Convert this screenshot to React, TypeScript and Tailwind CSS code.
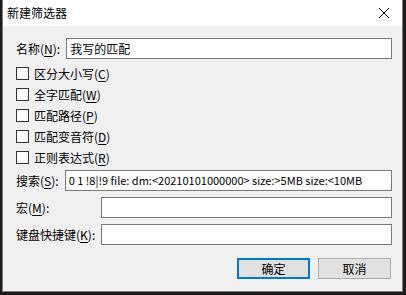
import React from "react";

const font = { fontFamily: '"Noto Sans CJK SC", "Noto Sans", sans-serif' };

const Key = ({ k }: { k: string }) => (
  <span>
    (<span className="underline underline-offset-2">{k}</span>)
  </span>
);

const Check = ({ label, k }: { label: string; k: string }) => (
  <div className="flex items-center h-[21px] gap-[5px]">
    <div className="w-[13px] h-[13px] bg-white border border-[#333333]" />
    <span>
      {label}
      <Key k={k} />
    </span>
  </div>
);

const Field = ({ value = "", small }: { value?: string; small?: boolean }) => (
  <div
    className={
      small
        ? "flex-1 h-[21px] bg-white border border-[#7a7a7a] flex items-center px-[3px] overflow-hidden whitespace-nowrap text-[11px]"
        : "flex-1 h-[21px] bg-white border border-[#7a7a7a] flex items-center px-[3px] overflow-hidden whitespace-nowrap"
    }
  >
    {value}
  </div>
);

export default function App() {
  return (
    <div className="w-[406px] h-[295px] bg-[#1c1a1a] overflow-hidden text-[12px] text-black" style={font}>
      <div className="ml-[2px] w-[401px] h-[292px] bg-[#f0f0f0] border-l border-r border-b border-[#7f7f7f] flex flex-col">
        {/* title */}
        <div className="h-[26px] bg-white flex items-center justify-between pl-[4px] pr-[12px] shrink-0">
          <span className="text-[12px]">新建筛选器</span>
          <svg width="12" height="12" viewBox="0 0 12 12">
            <path d="M1 1 L11 11 M11 1 L1 11" stroke="#000" strokeWidth="1" />
          </svg>
        </div>

        <div className="flex flex-col pl-[13px] pr-[10px] pt-[12px]">
          <div className="flex items-center gap-[6px]">
            <span>
              名称<Key k="N" />:
            </span>
            <Field value="我写的匹配" />
          </div>

          <div className="flex flex-col mt-[4px]">
            <Check label="区分大小写" k="C" />
            <Check label="全字匹配" k="W" />
            <Check label="匹配路径" k="P" />
            <Check label="匹配变音符" k="D" />
            <Check label="正则表达式" k="R" />
          </div>

          <div className="flex items-center gap-[6px] mt-[2px]">
            <span>
              搜索<Key k="S" />:
            </span>
            <Field small value="0 1 !8|!9 file: dm:<20210101000000> size:>5MB size:<10MB" />
          </div>

          <div className="flex items-center mt-[6px]">
            <span className="w-[85px]">
              宏<Key k="M" />:
            </span>
            <Field />
          </div>

          <div className="flex items-center mt-[6px]">
            <span className="w-[85px]">
              键盘快捷键<Key k="K" />:
            </span>
            <Field />
          </div>

          <div className="flex justify-end gap-[8px] mt-[13px] pr-[1px]">
            <button className="w-[73px] h-[21px] bg-[#e1e1e1] border-2 border-[#0078d7] flex items-center justify-center">
              确定
            </button>
            <button className="w-[73px] h-[21px] bg-[#e1e1e1] border border-[#adadad] flex items-center justify-center">
              取消
            </button>
          </div>
        </div>
      </div>
    </div>
  );
}
